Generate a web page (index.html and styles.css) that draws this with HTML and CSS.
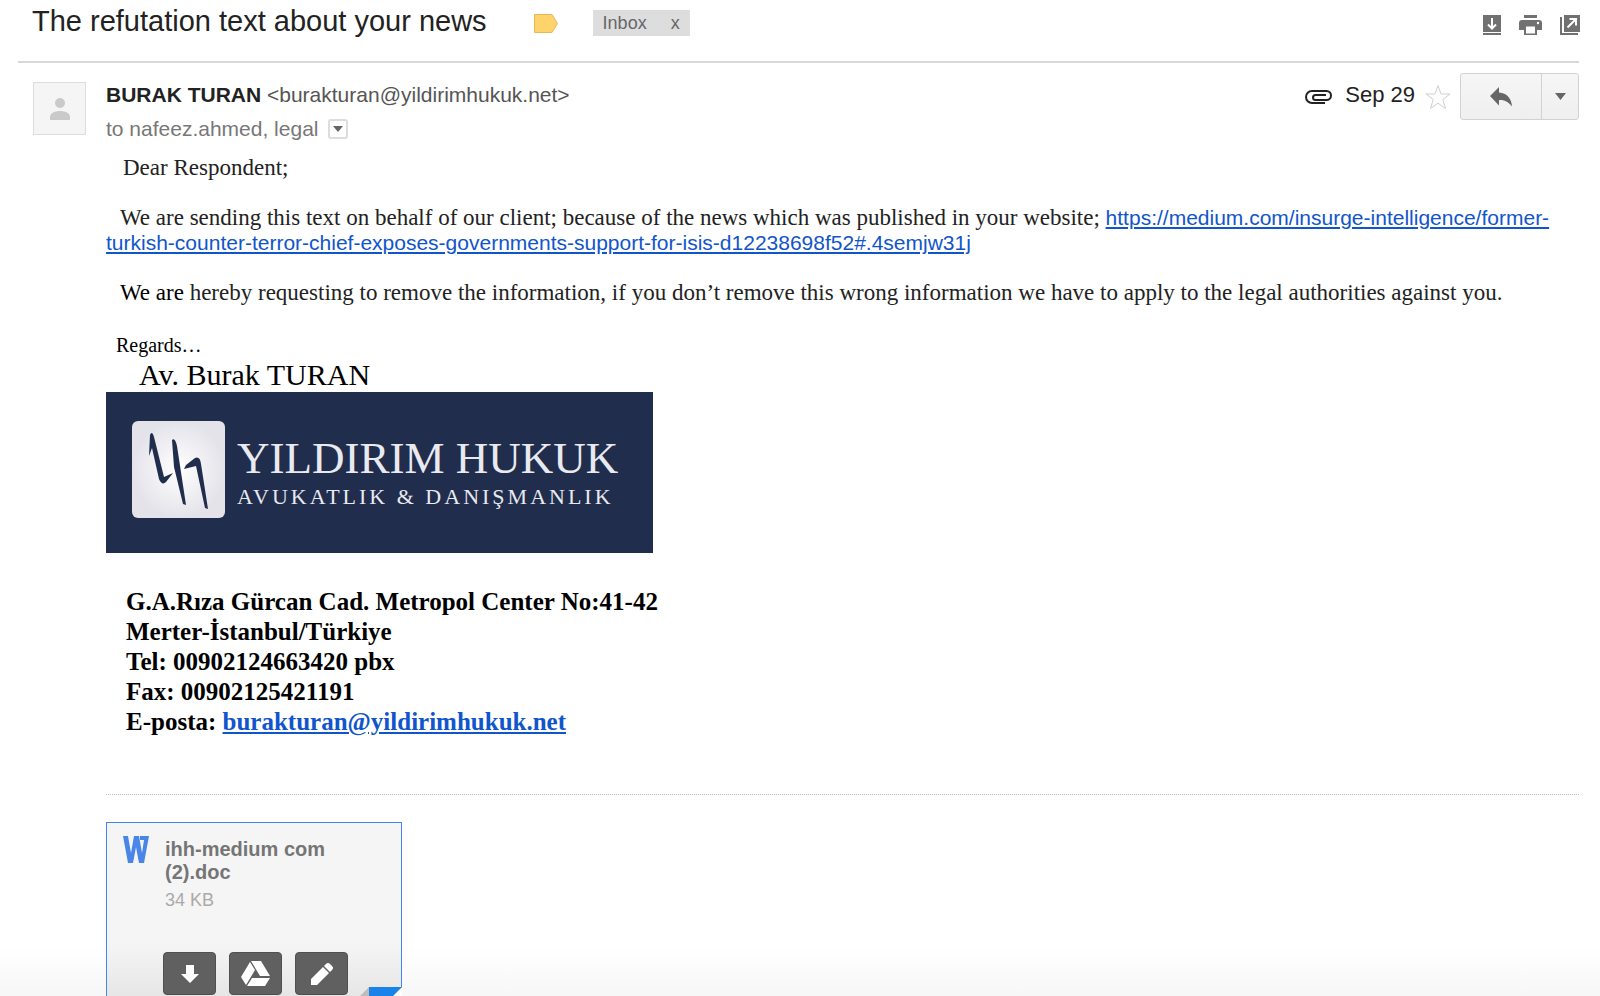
FILE: index.html
```html
<!DOCTYPE html>
<html lang="en">
<head>
<meta charset="utf-8">
<title>The refutation text about your news</title>
<link rel="stylesheet" href="styles.css">
</head>
<body>
<main class="mail">
  <header class="subject-bar">
    <h1 class="subject">The refutation text about your news</h1>
    <button class="icon-button marker" type="button" aria-label="Mark as important">
      <svg width="24" height="19" viewBox="0 0 24 19"><path d="M.5.5H18L23.500 9.500 18 18.500H.5Z" fill="#ffd36c" stroke="#e6b956"/></svg>
    </button>
    <span class="label-chip">Inbox <button class="chip-remove" type="button" aria-label="Remove label Inbox">x</button></span>
    <div class="tools">
      <button class="icon-button" type="button" aria-label="Download">
        <svg width="18" height="20" viewBox="0 0 18 20"><path d="M0 0h18v17H0zM0 18h18v2H0z" fill="#717171"/><path d="M9 3v10M5 9.500l4 4 4-4" fill="none" stroke="#fff" stroke-width="2"/></svg>
      </button>
      <button class="icon-button" type="button" aria-label="Print">
        <svg width="23" height="20" viewBox="0 0 23 20"><path d="M5 0h13v3H5zM3 5h17a3 3 0 0 1 3 3v7h-5v5H5v-5H0V8a3 3 0 0 1 3-3z" fill="#717171"/><path d="M7 11.500h9v7H7z" fill="#fff"/><circle cx="19" cy="8" r="1.200" fill="#fff"/></svg>
      </button>
      <button class="icon-button" type="button" aria-label="Open in new window">
        <svg width="20" height="20" viewBox="0 0 20 20"><path d="M4 0h16v17H4zM0 2h2v16h16v2H0z" fill="#717171"/><path d="M7.500 12.500l8-8M9.500 4h6.500v6.500" fill="none" stroke="#fff" stroke-width="2"/></svg>
      </button>
    </div>
  </header>

  <article class="message">
    <div class="avatar">
      <svg width="20" height="22" viewBox="0 0 20 22"><circle cx="10" cy="5" r="5" fill="#cacaca"/><path d="M0 22v-3c0-4 5-6 10-6s10 2 10 6v3z" fill="#cacaca"/></svg>
    </div>
    <div class="content">
      <div class="message-head">
        <div class="people">
          <div class="from"><strong>BURAK TURAN</strong> &lt;burakturan@yildirimhukuk.net&gt;</div>
          <div class="to">to nafeez.ahmed, legal
            <button class="details" type="button" aria-label="Show details"><svg width="10" height="6" viewBox="0 0 10 6"><path d="M0 0h10L5 6z" fill="#666"/></svg></button>
          </div>
        </div>
        <div class="meta">
          <svg width="27" height="14" viewBox="0 0 27 14" role="img" aria-label="Has attachment"><path d="M20 13H7A6 6 0 0 1 7 1H21.500a4.500 4.500 0 0 1 0 9H10.500a2.500 2.500 0 0 1 0-5H21" fill="none" stroke="#222" stroke-width="2"/></svg>
          <time class="date">Sep 29</time>
          <button class="icon-button" type="button" aria-label="Star">
            <svg width="26" height="26" viewBox="0 0 26 26"><path d="M13 1.500l3 8.500h9l-7.200 5.500 2.700 9L13 19.200 5.500 24.500l2.700-9L1 10h9z" fill="#fff" stroke="#cfcfcf"/></svg>
          </button>
          <div class="reply-group">
            <button class="reply" type="button" aria-label="Reply">
              <svg width="22" height="20" viewBox="0 0 22 20"><path d="M9 0v5.500c8 .5 12.500 6 13 14C18 14.500 15 13 9 13v5.500L0 9z" fill="#666"/></svg>
            </button>
            <button class="more" type="button" aria-label="More">
              <svg width="11" height="7" viewBox="0 0 11 7"><path d="M0 0h11L5.500 7z" fill="#666"/></svg>
            </button>
          </div>
        </div>
      </div>

      <div class="body-text">
        <p class="greeting">Dear Respondent;</p>
        <p class="para">We are sending this text on behalf of our client; because of the news which was published in your website; <a class="link" href="#">https://medium.com/insurge-intelligence/former-turkish-counter-terror-chief-exposes-governments-support-for-isis-d12238698f52#.4semjw31j</a></p>
        <p class="para"><span class="dark">We are</span> hereby requesting to remove the information, if you don’t remove this wrong information we have to apply to the legal authorities against you.</p>
      </div>

      <div class="signature">
        <p class="regards">Regards…</p>
        <p class="signer">Av. Burak TURAN</p>
        <div class="banner">
          <svg class="emblem" width="93" height="97" viewBox="0 0 93 97">
            <defs><radialGradient id="shine"><stop offset="0" stop-color="#fff"/><stop offset="1" stop-color="#e4e3ea"/></radialGradient></defs>
            <rect width="93" height="97" rx="6" fill="url(#shine)"/>
            <path d="M17 35L18 14Q20 9 22 16L32 56 41 52 34 61Q30 65 27 58L20 27ZM40 19Q43 16 45 25L54 84 51 83 42 46ZM52 48L54 44 63 37Q68 35 69 43L76 88 73 87 64 45Z" fill="#202d4c"/>
          </svg>
          <div class="banner-text">
            <span class="firm">YILDIRIM HUKUK</span>
            <span class="trade">AVUKATLIK &amp; DANIŞMANLIK</span>
          </div>
        </div>
        <address class="address">
          G.A.Rıza Gürcan Cad. Metropol Center No:41-42<br>
          Merter-İstanbul/Türkiye<br>
          Tel: 00902124663420 pbx<br>
          Fax: 00902125421191<br>
          E-posta: <a class="link" href="#">burakturan@yildirimhukuk.net</a>
        </address>
      </div>

      <section class="attachments">
        <div class="card">
          <svg class="doc-icon" width="26" height="27" viewBox="0 0 26 27"><path d="M0 0h5l3 17 3-17h5l3 17 2-13h-4V0h9l-5 27h-5L13 11l-3 16H5z" fill="#4986e7"/></svg>
          <div class="file">
            <div class="file-name">ihh-medium com (2).doc</div>
            <div class="file-size">34 KB</div>
            <div class="file-actions">
              <button class="file-button" type="button" aria-label="Download attachment"><svg width="18" height="18" viewBox="0 0 18 18"><path d="M5 0h8v9h5l-9 9-9-9h5z" fill="#fff"/></svg></button>
              <button class="file-button" type="button" aria-label="Save to Drive"><svg width="30" height="26" viewBox="0 0 30 26"><path d="M9 1L14 9 5 24 0 16ZM10 0H20L29 15H19ZM11 17H29L24 25H6Z" fill="#fff"/></svg></button>
              <button class="file-button" type="button" aria-label="Edit"><svg width="22" height="22" viewBox="0 0 22 22"><path d="M0 16L12 4l6 6L6 22H0zM13 3l2-2q2-2 4 0l2 2q2 2 0 4l-2 2z" fill="#fff"/></svg></button>
            </div>
          </div>
          <svg class="fold" width="43" height="43" viewBox="0 0 43 43"><path d="M43 0L0 43H43Z" fill="#fff"/><path d="M0 10L10 0V43H0z" fill="#bdbdbd"/><path d="M10 0H43L10 33z" fill="#1a82e8"/></svg>
        </div>
      </section>
    </div>
  </article>
</main>
</body>
</html>
```
FILE: styles.css
```css
* { box-sizing: border-box; }
body { margin: 0; height: 100vh; overflow: hidden; background: linear-gradient(#fff calc(100% - 50px), #f7f7f7); color: #222; font-family: "Liberation Sans", Arial, sans-serif; }
p, h1 { margin: 0; }
button { font: inherit; color: inherit; padding: 0; border: 0; background: none; cursor: pointer; }
svg { display: block; flex: none; }
.mail { padding: 0 21px 0 18px; }
.subject-bar { display: flex; align-items: center; height: 63px; padding: 0 0 15px 14px; border-bottom: 2px solid #d8d8d8; }
.subject { padding-bottom: 4px; font-size: 29px; line-height: 32px; font-weight: 400; }
.marker { margin-left: 47px; }
.label-chip { display: flex; gap: 24px; margin-left: 35px; padding: 0 10px; line-height: 26px; font-size: 18px; color: #666; background: #ddd; }
.tools { display: flex; gap: 18px; margin: 0 -1px 0 auto; padding-top: 4px; }
.message { display: flex; gap: 20px; padding: 10px 0 0 15px; }
.avatar { display: flex; align-items: center; justify-content: center; flex: none; width: 53px; height: 53px; margin-top: 9px; border: 1px solid #ddd; background: #f5f5f5; }
.content { flex: 1; min-width: 0; }
.message-head { display: flex; justify-content: space-between; height: 78px; }
.people { padding-top: 5px; font-size: 21px; line-height: 34px; color: #555; }
.people strong { color: #222; }
.to { display: flex; align-items: center; gap: 10px; color: #777; }
.details { display: flex; align-items: center; justify-content: center; width: 20px; height: 20px; border: 2px solid #ddd; border-radius: 3px; }
.meta { display: flex; align-items: center; height: 47px; }
.date { margin: 0 10px 0 13px; padding-bottom: 4px; font-size: 22px; }
.reply-group { display: flex; height: 47px; margin-left: 9px; border: 1px solid #d2d2d2; border-radius: 3px; background: linear-gradient(#f6f6f6, #efefef); }
.reply, .more { display: flex; align-items: center; justify-content: center; }
.reply { width: 80px; }
.more { width: 37px; border-left: 1px solid #d2d2d2; }
.body-text { font: 23px/25px "Liberation Serif", serif; }
.greeting { padding: 4px 0 0 17px; }
.para { margin-top: 25px; text-indent: 14px; }
.para .link { font-family: "Liberation Sans", Arial, sans-serif; font-size: 21px; line-height: 1; }
.dark { color: #000; }
.link { color: #15c; }
.signature { font-family: "Liberation Serif", serif; color: #000; }
.regards { margin-top: 27px; padding-left: 10px; font-size: 20px; line-height: 26px; }
.signer { padding-left: 33px; font-size: 30px; line-height: 34px; }
.banner { display: flex; align-items: center; gap: 12px; max-width: 547px; height: 161px; padding: 0 26px 6px; background: #202d4c; color: #e9e9f0; }
.banner-text { display: flex; flex-direction: column; gap: 4px; padding-top: 6px; }
.firm { font-size: 45px; line-height: 44px; white-space: nowrap; }
.trade { font-size: 22px; line-height: 26px; letter-spacing: 3px; white-space: nowrap; }
.address { margin-top: 34px; padding-left: 20px; font-size: 25px; line-height: 30px; font-weight: 700; font-style: normal; }
.attachments { margin-top: 57px; padding-top: 27px; border-top: 1px dotted #bbb; }
.card { position: relative; display: flex; gap: 16px; width: 296px; height: 208px; padding: 13px 16px; border: 1px solid #4285f4; background: linear-gradient(#f5f5f5 120px, #e6e6e6 174px); }
.file { padding-top: 2px; }
.file-name { max-width: 180px; font-size: 20px; line-height: 23px; font-weight: 700; color: #757575; }
.file-size { padding-top: 4px; font-size: 18px; line-height: 24px; color: #aaa; }
.file-actions { display: flex; gap: 13px; margin: 40px 0 0 -2px; }
.file-button { display: flex; align-items: center; justify-content: center; width: 53px; height: 43px; border: 1px solid #505050; border-radius: 4px; background: #606060; }
.fold { position: absolute; right: -1px; bottom: -1px; }
```
